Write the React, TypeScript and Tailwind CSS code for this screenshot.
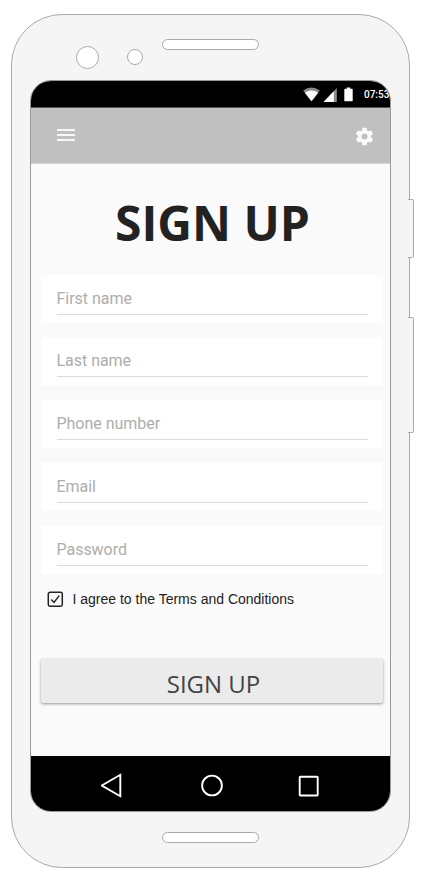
import React from "react";

const fields = [
  { label: "First name", type: "text", gap: "mb-[14px]" },
  { label: "Last name", type: "text", gap: "mb-[15px]" },
  { label: "Phone number", type: "tel", gap: "mb-[15px]" },
  { label: "Email", type: "email", gap: "mb-[15px]" },
  { label: "Password", type: "password", gap: "" },
];

function StatusBar() {
  return (
    <div className="flex h-[27px] shrink-0 items-center border-b border-[#555] bg-black pl-[272px] text-white">
      <svg className="h-[15px] w-[17px] shrink-0" viewBox="0 0 17 15">
        <path d="M0.2 3.6Q8.5-2.7 16.8 3.6L8.5 14.3Z" fill="#8c8c8c" />
        <path d="M1.8 5.7Q8.500 1.300 15.200 5.700L8.500 14.300Z" fill="#fff" />
      </svg>
      <svg className="ml-[3px] h-[15px] w-[14px] shrink-0" viewBox="0 0 14 15">
        <path d="M0.500 15L13.800 1V15Z" fill="#8c8c8c" />
        <path d="M0.500 15L10.800 4.200V15Z" fill="#fff" />
      </svg>
      <svg className="ml-[7px] h-[15px] w-[9px] shrink-0" viewBox="0 0 9 15">
        <path d="M2.8 0.5h3.4v1.3h1.6q.9 0 .9.9v10.7q0 .9-.9.9H1.2q-.9 0-.9-.9V2.7q0-.9.9-.9h1.6z" fill="#fff" />
      </svg>
      <span className="ml-[11px] whitespace-nowrap font-['Roboto',sans-serif] text-[10px] leading-[15px] font-medium">
        07:53
      </span>
    </div>
  );
}

function AppBar() {
  return (
    <header className="flex h-[56px] shrink-0 items-center justify-between border-b border-[#d8d8d8] bg-[#c0c0c0] pr-[15px] pl-[26px]">
      <button aria-label="Menu" className="mb-px flex w-[18px] flex-col gap-[3px]">
        <span className="h-[2px] w-full bg-[#f7f7f7]" />
        <span className="h-[2px] w-full bg-[#f7f7f7]" />
        <span className="h-[2px] w-full bg-[#f7f7f7]" />
      </button>
      <button aria-label="Settings">
        <svg className="mt-[1px] size-[21px]" viewBox="0 0 24 24" fill="#fafafa">
          <path d="M19.43 12.98c.04-.32.07-.64.07-.98s-.03-.66-.07-.98l2.11-1.65c.19-.15.24-.42.12-.64l-2-3.46c-.12-.22-.39-.3-.61-.22l-2.49 1c-.52-.4-1.08-.73-1.69-.98l-.38-2.65C14.46 2.18 14.25 2 14 2h-4c-.25 0-.46.18-.49.42l-.38 2.65c-.61.25-1.17.59-1.69.98l-2.49-1c-.23-.09-.49 0-.61.22l-2 3.46c-.13.22-.07.49.12.64l2.11 1.65c-.04.32-.07.65-.07.98s.03.66.07.98l-2.11 1.65c-.19.15-.24.42-.12.64l2 3.46c.12.22.39.3.61.22l2.49-1c.52.4 1.08.73 1.69.98l.38 2.65c.03.24.24.42.49.42h4c.25 0 .46-.18.49-.42l.38-2.65c.61-.25 1.17-.59 1.69-.98l2.49 1c.23.09.49 0 .61-.22l2-3.46c.12-.22.07-.49-.12-.64l-2.11-1.65zM12 15.5c-1.93 0-3.5-1.57-3.5-3.5s1.57-3.5 3.5-3.5 3.5 1.57 3.5 3.5-1.57 3.5-3.5 3.5z" />
        </svg>
      </button>
    </header>
  );
}

function SignUpForm() {
  return (
    <main className="flex flex-1 flex-col bg-[#fafafa] px-[10px]">
      <h1 className="mt-[24px] h-[70px] whitespace-nowrap pl-[4px] text-center font-['Open_Sans',sans-serif] text-[48px] leading-[70px] font-bold text-[#222]">
        SIGN UP
      </h1>
      <form className="mt-[17px] mr-[-3px] flex w-[342px] flex-col">
        {fields.map((field) => (
          <label key={field.label} className={`flex h-[48px] flex-col bg-white pr-[15px] pl-[15.500px] pt-[12px] ${field.gap}`}>
            <input
              type={field.type}
              placeholder={field.label}
              className="h-[28px] w-full border-b border-[#dcdcdc] bg-transparent pb-[4px] font-['Roboto',sans-serif] text-[16px] leading-[23px] tracking-[-0.03px] outline-none placeholder:text-[#adadad]"
            />
          </label>
        ))}
      </form>
      <label className="mt-[15px] flex h-[20px] items-center pl-[6px]">
        <svg className="size-[17px]" viewBox="0 0 17 17" fill="none" stroke="#222">
          <rect x="1.3" y="1.2" width="14" height="14" rx="1.7" strokeWidth="1.5" />
          <path d="M4.3 8.500L7 11.400L12.300 4.600" strokeWidth="1.5" />
        </svg>
        <span className="ml-[8.500px] whitespace-nowrap font-['Liberation_Sans',sans-serif] text-[14px] leading-[20px] text-[#222]">
          I agree to the Terms and Conditions
        </span>
      </label>
      <button className="mt-[50px] h-[44px] w-[342px] rounded-[2px] bg-[#ebebeb] pt-[4px] pl-[3px] font-['Open_Sans',sans-serif] text-[24px] leading-[39px] text-[#444] shadow-[0_1px_3px_rgba(0,0,0,0.4)]">
        SIGN UP
      </button>
    </main>
  );
}

function NavigationBar() {
  return (
    <nav className="flex h-[55px] shrink-0 items-center justify-center bg-black pt-[4px]">
      <svg className="h-[26px] w-[220px]" viewBox="0 0 220 26" fill="none" stroke="#fff" strokeWidth="1.9">
        <path d="M0.8 12.5L19.300 1.800V23.200Z" />
        <circle cx="111" cy="12.500" r="9.900" />
        <rect x="198.700" y="3.700" width="18" height="18.800" rx="0.7" />
      </svg>
    </nav>
  );
}

export default function App() {
  return (
    <div className="h-[880px] w-[423px] overflow-hidden bg-white pt-[14px] pl-[11px]">
      <div className="relative flex h-[854px] w-[399px] flex-col rounded-[51px] border border-[#aaa] bg-[#f5f5f5]">
        <div className="absolute top-[184px] right-[-5px] h-[59px] w-[6px] rounded-r-[2px] border border-l-0 border-[#aaa] bg-[#f5f5f5]" />
        <div className="absolute top-[302px] right-[-5px] h-[116px] w-[6px] rounded-r-[2px] border border-l-0 border-[#aaa] bg-[#f5f5f5]" />
        <div className="flex h-[65px] shrink-0 items-start pl-[63.500px]">
          <div className="mt-[31px] size-[23px] rounded-full border border-[#aaa] bg-white" />
          <div className="mt-[34px] ml-[28.500px] size-[16px] rounded-full border border-[#aaa] bg-white" />
          <div className="mt-[24px] ml-[19px] h-[11px] w-[97px] rounded-full border border-[#aaa] bg-white" />
        </div>
        <div className="ml-[18px] flex h-[732px] w-[361px] shrink-0 flex-col overflow-hidden rounded-[21px] border border-[#999]">
          <StatusBar />
          <AppBar />
          <SignUpForm />
          <NavigationBar />
        </div>
        <div className="mt-[20px] ml-[150px] h-[11px] w-[97px] rounded-full border border-[#aaa] bg-white" />
      </div>
    </div>
  );
}
